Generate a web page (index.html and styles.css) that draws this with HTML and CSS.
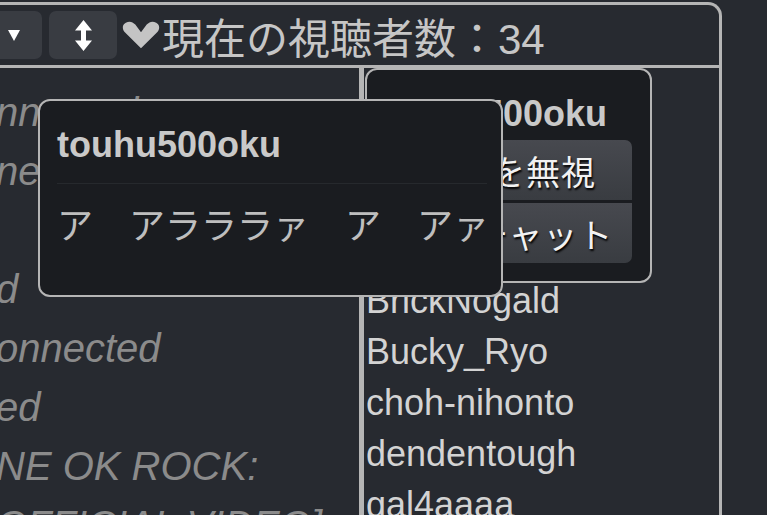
FILE: index.html
```html
<!DOCTYPE html>
<html>
	<head>
		<meta charset=utf-8>
		<title>視聴者</title>
		<link rel="stylesheet" href="styles.css">
	</head>
	<body>
		<div class="panel">
			<div class="header">
				<div class="btn btn-menu">
					<svg width="12" height="11" viewBox="0 0 12 11"><path d="M0 0H12L6 11Z" fill="#fff"/></svg>
				</div>
				<div class="btn btn-sort">
					<svg width="17" height="31" viewBox="0 0 17 31"><path d="M8.5 0L17 10.5H11V20.5H17L8.5 31L0 20.5H6V10.5H0Z" fill="#fff"/></svg>
				</div>
				<div class="viewers">
					<svg class="heart" viewBox="0 0 40 28"><path d="M20 28L3 11C0 8 0 3 4 1C8 -1 11 0 14 3L20 11L26 3C29 0 32 -1 36 1C40 3 40 8 37 11Z" fill="#c4c4c4"/></svg>
					現在の視聴者数：34
				</div>
			</div>
			<div class="content">
				<div class="log">
					<div class="log-line">nnected</div>
					<div class="log-line">ne</div>
					<div class="log-line"></div>
					<div class="log-line">d</div>
					<div class="log-line">onnected</div>
					<div class="log-line">ed</div>
					<div class="log-line">NE OK ROCK:</div>
					<div class="log-line">OFFICIAL VIDEO]</div>
				</div>
				<div class="users">
					<div class="user">0zero_0</div>
					<div class="user">akira_k</div>
					<div class="user">amagumo</div>
					<div class="user">Ayame77</div>
					<div class="user">BrickNogald</div>
					<div class="user">Bucky_Ryo</div>
					<div class="user">choh-nihonto</div>
					<div class="user">dendentough</div>
					<div class="user">gal4aaaa</div>

					<div class="user-card">
						<div class="card-name">touhu500oku</div>
						<div class="card-actions">
							<div class="card-btn">発言を無視</div>
							<div class="card-btn">個人チャット</div>
						</div>
					</div>
				</div>
				<div class="tooltip">
					<div class="card-name">touhu500oku</div>
					<div class="tip-rule"></div>
					<div class="tip-text">ア　アラララァ　ア　アァ</div>
				</div>
			</div>
		</div>
	</body>
</html>
```

FILE: styles.css
```css
body {
	margin: 0;
	background: #272a30;
	overflow: hidden;
	font-family: "Liberation Sans", "Noto Sans CJK JP", sans-serif;
}

.panel {
	width: 762px; height: 560px;
	margin: 2px 0 0 -40px;
	box-sizing: border-box;
	border: 3px solid #b5b5b5;
	border-bottom: none;
	border-top-right-radius: 14px;
}

.header {
	display: flex;
	align-items: center;
	gap: 7px;
	height: 60px;
	padding-left: 23px;
	border-bottom: 3px solid #b5b5b5;
}
.btn {
	display: flex;
	align-items: center;
	justify-content: center;
	height: 48px;
	border-radius: 7px;
	background: #393c42;
}
.btn-menu { width: 56px; }
.btn-sort { width: 68px; }
.viewers {
	display: flex;
	align-items: center;
	margin-left: -2px;
	font-size: 42px;
	color: #c6c6c6;
	white-space: nowrap;
}
.heart { width: 38px; height: 28px; margin-right: 2px; }

.content {
	position: relative;
	display: flex;
	height: 460px;
}
.log {
	flex: none;
	width: 396px;
	box-sizing: border-box;
	padding: 15px 0 0 33px;
	overflow: hidden;
	font-size: 40px;
	font-style: italic;
	line-height: 59px;
	color: #8b8b8b;
	white-space: nowrap;
}
.log-line { height: 59px; }

.users {
	position: relative;
	flex: 1;
	border-left: 5px solid #b5b5b5;
	padding: 3px 0 0 2px;
	font-size: 36px;
	line-height: 51px;
	color: #d3d3d3;
}

/* popup menu for a user */
.user-card {
	position: absolute;
	top: 0; left: 1px;
	width: 287px; height: 215px;
	box-sizing: border-box;
	padding: 23px 18px 18px 16px;
	border: 2px solid #b5b5b5;
	border-radius: 12px;
	background: #1a1c20;
}
.card-name {
	font-size: 36px;
	font-weight: bold;
	line-height: 41px;
	color: #c9c9c9;
}
.card-actions {
	display: flex;
	flex-direction: column;
	gap: 3px;
	margin: 6px 0 0 2px;
}
.card-btn {
	display: flex;
	align-items: center;
	justify-content: center;
	height: 60px;
	background: linear-gradient(#47494f, #393c41);
	color: #f2f2f2;
	font-family: "Noto Sans CJK JP", sans-serif;
	font-size: 34px;
	letter-spacing: 1px;
	text-shadow: 1px 2px 2px #000;
}
.card-btn:first-child { border-radius: 7px 7px 0 0; }
.card-btn:last-child { border-radius: 0 0 7px 7px; }

/* comment tooltip */
.tooltip {
	position: absolute;
	top: 31px; left: 75px;
	width: 465px; height: 198px;
	box-sizing: border-box;
	padding: 23px 14px 0 17px;
	border: 2px solid #b5b5b5;
	border-radius: 12px;
	background: #1a1c20;
}
.tip-rule {
	margin-top: 18px;
	border-top: 1px solid #26292d;
}
.tip-text {
	margin-top: 13px;
	font-family: "Noto Sans CJK JP", sans-serif;
	font-size: 36px;
	color: #bebebe;
	white-space: nowrap;
}
```
